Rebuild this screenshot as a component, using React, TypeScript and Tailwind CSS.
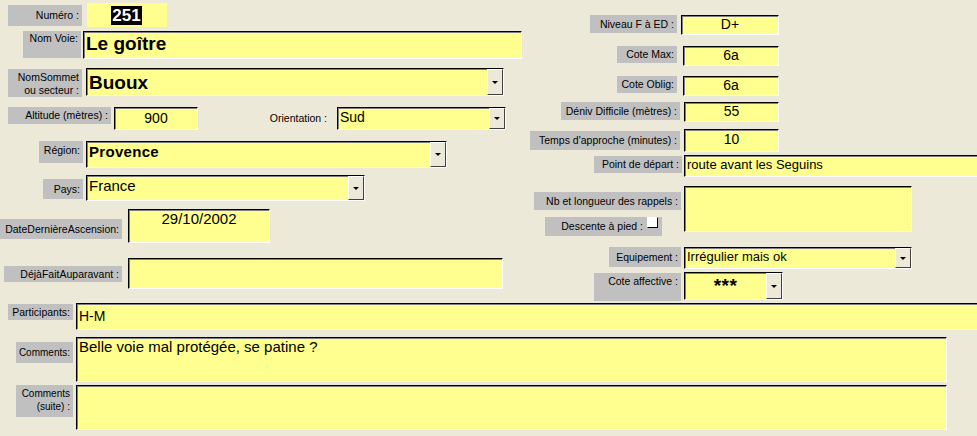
import React from 'react'

function Label({ className, size = 'text-[10.5px]', children }: { className: string; size?: string; children: React.ReactNode }) {
  return (
    <div className={`bg-[#c0c0c0] text-right text-black leading-[13px] pr-[3px] shrink-0 whitespace-nowrap ${size} ${className}`}>
      {children}
    </div>
  )
}

function DropBtn() {
  return (
    <div className="w-[16px] shrink-0 bg-[#ece9d8] border border-t-white border-l-white border-r-[#404040] border-b-[#404040] flex items-center justify-center">
      <div className="w-0 h-0 border-l-[3px] border-r-[3px] border-t-[3px] border-l-transparent border-r-transparent border-t-black" />
    </div>
  )
}

function Field({ className, combo, children }: { className: string; combo?: boolean; children?: React.ReactNode }) {
  return (
    <div className={`bg-[#ffff8f] border border-t-black border-l-black border-r-white border-b-white shadow-[inset_1px_1px_0_#808080] flex shrink-0 text-black ${className}`}>
      <div className="flex-1 min-w-0 overflow-hidden whitespace-nowrap">{children}</div>
      {combo && <DropBtn />}
    </div>
  )
}

export default function App() {
  return (
    <div className="w-[977px] h-[436px] bg-[#ece9d8] overflow-hidden font-['Liberation_Sans',Arial,sans-serif]">
      <div className="flex h-[298px]">
        {/* colonne gauche */}
        <div className="w-[530px] shrink-0 flex flex-col">
          <div className="flex items-start mt-[3px]">
            <Label className="ml-[8px] w-[74px] h-[21px] mt-[2px] flex items-center justify-end">Numéro :</Label>
            <div className="ml-[5px] w-[80px] h-[24px] bg-[#ffff8f] shrink-0">
              <div className="ml-[24px] mt-[3px] w-[31px] h-[19px] bg-black text-white font-bold text-[17px] leading-[19px] text-center">251</div>
            </div>
          </div>

          <div className="flex items-start mt-[4px]">
            <Label className="ml-[23px] w-[58px] h-[27px] pt-[1px]">Nom Voie:</Label>
            <Field className="ml-[2px] w-[439px] h-[28px]">
              <div className="pl-[2px] pt-[1px] text-[19px] leading-[22px] font-bold">Le goître</div>
            </Field>
          </div>

          <div className="flex items-start mt-[9px]">
            <Label className="ml-[8px] w-[74px] h-[28px] mt-[1px] pt-[2px] leading-[12px]">
              NomSommet
              <br />
              ou secteur :
            </Label>
            <Field combo className="ml-[4px] w-[418px] h-[28px]">
              <div className="pl-[2px] pt-[3px] text-[19px] leading-[22px] font-bold">Buoux</div>
            </Field>
          </div>

          <div className="flex items-start mt-[10px]">
            <Label className="ml-[8px] w-[103px] h-[17px] flex items-center justify-end">Altitude (mètres) :</Label>
            <Field className="ml-[3px] w-[84px] h-[23px]">
              <div className="text-center pt-[2px] text-[14px] leading-[17px]">900</div>
            </Field>
            <div className="w-[132px] shrink-0 text-right text-[10.5px] leading-[13px] pt-[5px] pr-[3px]">Orientation :</div>
            <Field combo className="ml-[7px] w-[169px] h-[23px]">
              <div className="pl-[2px] pt-[1px] text-[14px] leading-[17px]">Sud</div>
            </Field>
          </div>

          <div className="flex items-start mt-[11px]">
            <Label className="ml-[39px] w-[44px] h-[22px] pt-[3px]">Région:</Label>
            <Field combo className="ml-[3px] w-[361px] h-[27px]">
              <div className="pl-[2px] pt-[1px] text-[15px] leading-[18px] font-bold tracking-[0.3px]">Provence</div>
            </Field>
          </div>

          <div className="flex items-start mt-[7px]">
            <Label className="ml-[43px] w-[40px] h-[20px] mt-[4px] flex items-center justify-end">Pays:</Label>
            <Field combo className="ml-[3px] w-[279px] h-[26px]">
              <div className="pl-[2px] pt-[1px] text-[15px] leading-[18px]">France</div>
            </Field>
          </div>

          <div className="flex items-start mt-[8px]">
            <Label className="w-[122px] h-[20px] mt-[10px] flex items-center justify-end">DateDernièreAscension:</Label>
            <Field className="ml-[6px] w-[142px] h-[34px]">
              <div className="text-center text-[15px] leading-[18px]">29/10/2002</div>
            </Field>
          </div>

          <div className="flex items-start mt-[15px]">
            <Label className="ml-[4px] w-[118px] h-[16px] mt-[8px] flex items-center justify-end">DéjàFaitAuparavant :</Label>
            <Field className="ml-[6px] w-[375px] h-[31px]" />
          </div>
        </div>

        {/* colonne droite */}
        <div className="flex-1 flex flex-col">
          <div className="flex items-start mt-[15px]">
            <Label className="ml-[60px] w-[87px] h-[18px] flex items-center justify-end">Niveau F à ED :</Label>
            <Field className="ml-[4px] w-[98px] h-[20px]">
              <div className="text-center text-[14px] leading-[17px]">D+</div>
            </Field>
          </div>

          <div className="flex items-start mt-[11px]">
            <Label className="ml-[87px] w-[60px] h-[17px] flex items-center justify-end">Cote Max:</Label>
            <Field className="ml-[6px] w-[96px] h-[20px]">
              <div className="text-center text-[14px] leading-[17px]">6a</div>
            </Field>
          </div>

          <div className="flex items-start mt-[10px]">
            <Label className="ml-[87px] w-[60px] h-[17px] flex items-center justify-end">Cote Oblig:</Label>
            <Field className="ml-[6px] w-[96px] h-[20px]">
              <div className="text-center text-[14px] leading-[17px]">6a</div>
            </Field>
          </div>

          <div className="flex items-start mt-[6px]">
            <Label className="ml-[31px] w-[119px] h-[18px] flex items-center justify-end">Déniv Difficile (mètres) :</Label>
            <Field className="ml-[4px] w-[95px] h-[20px]">
              <div className="text-center text-[14px] leading-[17px]">55</div>
            </Field>
          </div>

          <div className="flex items-start mt-[7px]">
            <Label className="w-[150px] h-[19px] mt-[2px] flex items-center justify-end">Temps d'approche (minutes) :</Label>
            <Field className="ml-[4px] w-[95px] h-[23px]">
              <div className="text-center text-[14px] leading-[17px] pt-[1px]">10</div>
            </Field>
          </div>

          <div className="flex items-start mt-[3px]">
            <Label className="ml-[64px] w-[88px] h-[17px] mt-[1px] flex items-center justify-end">Point de départ :</Label>
            <Field className="ml-[2px] flex-1 h-[22px] border-r-0">
              <div className="pl-[2px] pt-[1px] text-[13px] leading-[16px]">route avant les Seguins</div>
            </Field>
          </div>

          <div className="flex items-start mt-[9px]">
            <div className="w-[152px] shrink-0 flex flex-col">
              <Label className="ml-[4px] w-[147px] h-[18px] mt-[6px] flex items-center justify-end">Nb et longueur des rappels :</Label>
              <Label className="ml-[15px] w-[117px] h-[19px] mt-[7px] flex items-start justify-end pr-[4px]">
                <span className="pt-[3px]">Descente à pied :</span>
                <span className="ml-[4px] w-[11px] h-[11px] bg-white border border-t-white border-l-white border-r-black border-b-black" />
              </Label>
            </div>
            <Field className="ml-[2px] w-[228px] h-[46px]" />
          </div>

          <div className="flex items-start mt-[11px]">
            <Label className="ml-[79px] w-[72px] h-[20px] flex items-center justify-end">Equipement :</Label>
            <Field combo className="ml-[3px] w-[228px] h-[22px]">
              <div className="pl-[2px] pt-[1px] text-[13px] leading-[16px]">Irrégulier mais ok</div>
            </Field>
          </div>

          <div className="flex items-start mt-[3px]">
            <Label className="ml-[64px] w-[87px] h-[28px] mt-[1px] pt-[2px]">Cote affective :</Label>
            <Field combo className="ml-[3px] w-[99px] h-[28px]">
              <div className="text-center pt-[3px] text-[19px] leading-[19px] font-bold tracking-[0.5px]">***</div>
            </Field>
          </div>
        </div>
      </div>

      {/* bas */}
      <div className="flex flex-col">
        <div className="flex items-start mt-[5px]">
          <Label className="ml-[8px] w-[65px] h-[16px] mt-[1px] flex items-center justify-end">Participants:</Label>
          <Field className="ml-[3px] flex-1 h-[27px] border-r-0">
            <div className="pl-[2px] pt-[4px] text-[14px] leading-[17px]">H-M</div>
          </Field>
        </div>

        <div className="flex items-start mt-[7px]">
          <Label size="text-[10px]" className="ml-[16px] w-[57px] h-[21px] mt-[5px] flex items-center justify-end">Comments:</Label>
          <Field className="ml-[3px] w-[871px] h-[45px]">
            <div className="pl-[2px] text-[15px] leading-[18px]">Belle voie mal protégée, se patine ?</div>
          </Field>
        </div>

        <div className="flex items-start mt-[3px]">
          <Label size="text-[10px]" className="ml-[16px] w-[57px] h-[32px] pt-[2px] leading-[12px]">
            Comments
            <br />
            (suite) :
          </Label>
          <Field className="ml-[3px] w-[871px] h-[45px]" />
        </div>
      </div>
    </div>
  )
}
